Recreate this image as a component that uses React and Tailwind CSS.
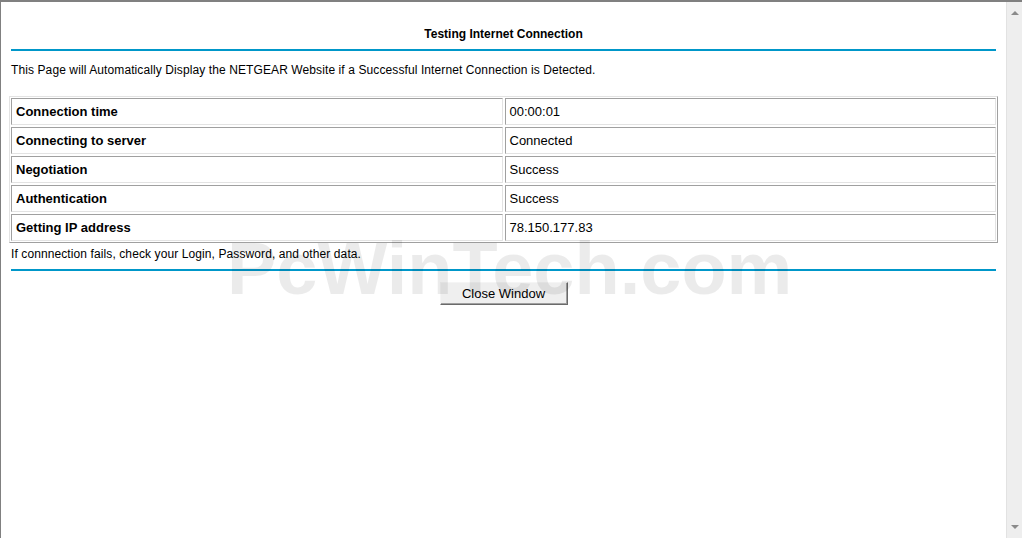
import React from 'react';

const rows = [
  ['Connection time', '00:00:01'],
  ['Connecting to server', 'Connected'],
  ['Negotiation', 'Success'],
  ['Authentication', 'Success'],
  ['Getting IP address', '78.150.177.83'],
];

const Cell = ({ children, bold }) => (
  <div
    className={`h-[27px] flex items-center pl-[4px] border border-t-[#a0a0a0] border-l-[#a0a0a0] border-b-[#e3e3e3] border-r-[#e3e3e3] text-[13px] text-black ${bold ? 'font-bold' : ''}`}
  >
    {children}
  </div>
);

const App = () => {
  return (
    <div
      className="w-[1022px] h-[538px] flex bg-white border-t-2 border-l border-[#808080] overflow-hidden"
      style={{ fontFamily: '"Liberation Sans", Arial, sans-serif' }}
    >
      <div className="relative flex-1 px-[10px]">
        <div className="pt-[25px] text-center text-[12px] leading-[14px] font-bold text-black">
          Testing Internet Connection
        </div>
        <div className="mt-[8px] h-[2px] bg-[#0097c9]" />
        <div className="mt-[12px] text-[12px] leading-[14px] tracking-[0.1px] text-black">
          This Page will Automatically Display the NETGEAR Website if a Successful Internet Connection is Detected.
        </div>

        <div className="mt-[19px] mx-[-2px] p-[1px] border border-t-[#e3e3e3] border-l-[#e3e3e3] border-b-[#a0a0a0] border-r-[#a0a0a0] grid grid-cols-2 gap-[2px]">
          {rows.map(([label, value]) => (
            <React.Fragment key={label}>
              <Cell bold>{label}</Cell>
              <Cell>{value}</Cell>
            </React.Fragment>
          ))}
        </div>

        <div className="mt-[4px] text-[12px] leading-[14px] tracking-[0.1px] text-black">
          If connnection fails, check your Login, Password, and other data.
        </div>
        <div className="mt-[8px] h-[2px] bg-[#0097c9]" />
        <div className="mt-[11px] flex justify-center">
          <button className="w-[128px] h-[23px] text-[13px] text-black bg-[#efefef] border border-t-[#f5f5f5] border-l-[#f5f5f5] border-b-[#6a6a6a] border-r-[#6a6a6a] shadow-[inset_-1px_-1px_0_#a0a0a0]">
            Close Window
          </button>
        </div>

        <div className="absolute left-[226px] top-[230px] text-[74px] leading-none font-bold text-black/[0.08] pointer-events-none select-none whitespace-nowrap">
          PcWinTech.com
        </div>
      </div>

      <div className="w-[16px] h-full bg-[#eeeeee] border-l border-[#e2e2e2] flex flex-col items-center justify-between py-[9px]">
        <div className="w-0 h-0 border-l-[4px] border-r-[4px] border-b-[4px] border-l-transparent border-r-transparent border-b-[#8a8a8a]" />
        <div className="w-0 h-0 border-l-[4px] border-r-[4px] border-t-[4px] border-l-transparent border-r-transparent border-t-[#8a8a8a]" />
      </div>
    </div>
  );
};

export default App;
